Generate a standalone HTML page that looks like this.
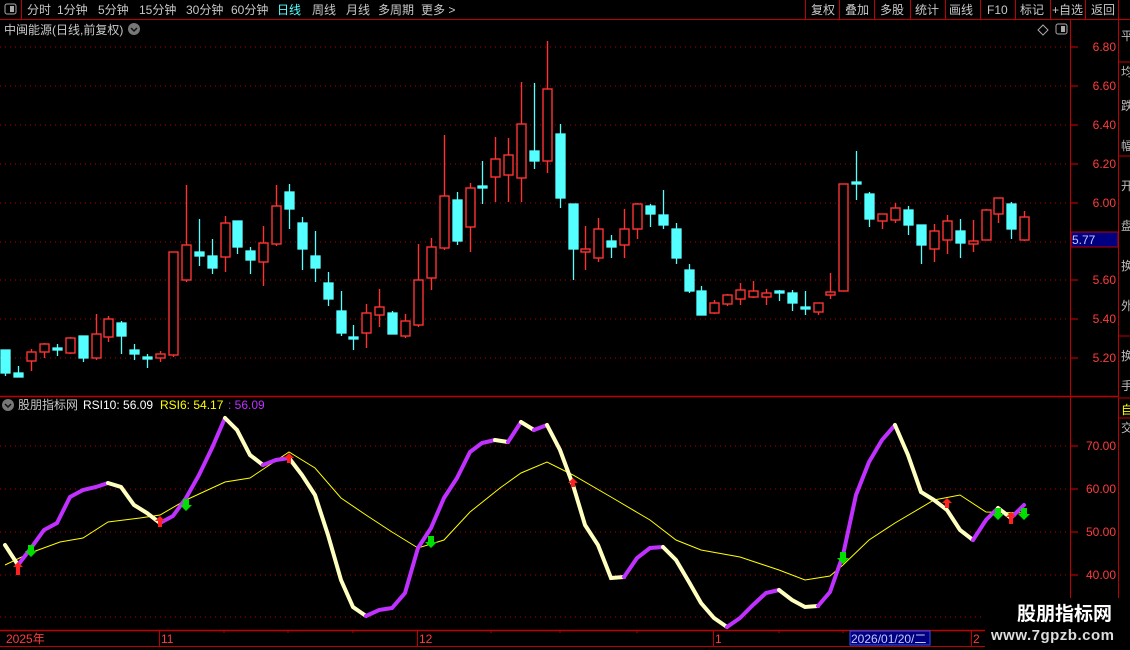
<!DOCTYPE html>
<html><head><meta charset="utf-8"><style>
body{margin:0;background:#000;width:1130px;height:650px;overflow:hidden;font-family:"Liberation Sans","Noto Sans CJK SC",sans-serif;}
</style></head><body>
<svg width="1130" height="650" style="position:absolute;left:0;top:0" font-family="Liberation Sans, Noto Sans CJK SC, sans-serif">
<line x1="0" y1="19.5" x2="1130" y2="19.5" stroke="#c00000"/>
<line x1="21.5" y1="0" x2="21.5" y2="19" stroke="#c00000"/>
<rect x="5" y="4" width="11" height="10" rx="2" fill="none" stroke="#aaa"/><rect x="10" y="6" width="4" height="6" fill="#aaa"/>
<g font-size="12" fill="#c8c8c8">
<text x="27" y="14">分时</text><text x="57" y="14">1分钟</text><text x="98" y="14">5分钟</text><text x="139" y="14">15分钟</text><text x="186" y="14">30分钟</text><text x="231" y="14">60分钟</text>
<text x="277" y="14" fill="#54ffff">日线</text><text x="312" y="14">周线</text><text x="346" y="14">月线</text><text x="378" y="14">多周期</text><text x="421" y="14">更多 &gt;</text>
<text x="811" y="14">复权</text><text x="845" y="14">叠加</text><text x="880" y="14">多股</text><text x="915" y="14">统计</text><text x="949" y="14">画线</text><text x="987" y="14">F10</text><text x="1020" y="14">标记</text><text x="1052" y="14">+自选</text><text x="1091" y="14">返回</text>
</g>
<g stroke="#c00000"><line x1="805.5" y1="0" x2="805.5" y2="19"/><line x1="839.5" y1="0" x2="839.5" y2="19"/><line x1="874.5" y1="0" x2="874.5" y2="19"/><line x1="910.5" y1="0" x2="910.5" y2="19"/><line x1="945.5" y1="0" x2="945.5" y2="19"/><line x1="980.5" y1="0" x2="980.5" y2="19"/><line x1="1015.5" y1="0" x2="1015.5" y2="19"/><line x1="1050.5" y1="0" x2="1050.5" y2="19"/><line x1="1085.5" y1="0" x2="1085.5" y2="19"/><line x1="1118.5" y1="0" x2="1118.5" y2="19"/></g>
<text x="4" y="34" font-size="12" fill="#c8c8c8">中闽能源(日线,前复权)</text>
<circle cx="134" cy="29" r="6" fill="#777"/><path d="M131 28l3 3 3-3" stroke="#111" fill="none" stroke-width="1.5"/>
<path d="M1043 25l5 5-5 5-5-5z" fill="none" stroke="#aaa"/>
<rect x="1056" y="24" width="11" height="10" rx="2" fill="none" stroke="#aaa"/><rect x="1061" y="26" width="4" height="6" fill="#aaa"/>
<line x1="1070.5" y1="20" x2="1070.5" y2="646" stroke="#c00000"/>
<line x1="1118.5" y1="20" x2="1118.5" y2="650" stroke="#c00000"/>
<line x1="0" y1="396.5" x2="1118" y2="396.5" stroke="#c00000" stroke-width="1.5"/>
<line x1="0" y1="630.5" x2="1118" y2="630.5" stroke="#c00000" stroke-width="1.5"/>
<line x1="0" y1="646.5" x2="1118" y2="646.5" stroke="#c00000"/>
<g stroke="#b00000" stroke-dasharray="1 4">
<line x1="0" y1="47" x2="1068" y2="47"/><line x1="0" y1="86" x2="1068" y2="86"/><line x1="0" y1="125" x2="1068" y2="125"/><line x1="0" y1="164" x2="1068" y2="164"/><line x1="0" y1="203" x2="1068" y2="203"/><line x1="0" y1="242" x2="1068" y2="242"/><line x1="0" y1="280" x2="1068" y2="280"/><line x1="0" y1="319" x2="1068" y2="319"/><line x1="0" y1="358" x2="1068" y2="358"/>
<line x1="0" y1="446" x2="1068" y2="446"/><line x1="0" y1="489" x2="1068" y2="489"/><line x1="0" y1="532" x2="1068" y2="532"/><line x1="0" y1="575" x2="1068" y2="575"/><line x1="0" y1="617" x2="1068" y2="617"/>
</g>
<g stroke="#e00000"><line x1="1070" y1="47" x2="1078" y2="47"/><line x1="1070" y1="86" x2="1078" y2="86"/><line x1="1070" y1="125" x2="1078" y2="125"/><line x1="1070" y1="164" x2="1078" y2="164"/><line x1="1070" y1="203" x2="1078" y2="203"/><line x1="1070" y1="280" x2="1078" y2="280"/><line x1="1070" y1="319" x2="1078" y2="319"/><line x1="1070" y1="358" x2="1078" y2="358"/>
<line x1="1070" y1="446" x2="1078" y2="446"/><line x1="1070" y1="489" x2="1078" y2="489"/><line x1="1070" y1="532" x2="1078" y2="532"/><line x1="1070" y1="575" x2="1078" y2="575"/></g>
<g font-size="12" fill="#ff3c3c" text-anchor="end">
<text x="1116" y="51">6.80</text><text x="1116" y="90">6.60</text><text x="1116" y="129">6.40</text><text x="1116" y="168">6.20</text><text x="1116" y="207">6.00</text><text x="1116" y="284">5.60</text><text x="1116" y="323">5.40</text><text x="1116" y="362">5.20</text>
<text x="1116" y="450">70.00</text><text x="1116" y="493">60.00</text><text x="1116" y="536">50.00</text><text x="1116" y="579">40.00</text>
</g>
<rect x="1071" y="232" width="47" height="15" fill="#000080" stroke="#c00000"/>
<text x="1072" y="244" font-size="12" fill="#c8c8ff">5.77</text>
<g stroke="#c00000"><line x1="1118" y1="62" x2="1130" y2="62"/><line x1="1118" y1="156" x2="1130" y2="156"/><line x1="1118" y1="336" x2="1130" y2="336"/><line x1="1118" y1="398" x2="1130" y2="398"/><line x1="1118" y1="418" x2="1130" y2="418"/></g>
<g font-size="12" fill="#bbb"><text x="1121" y="40">平</text><text x="1121" y="76">均</text><text x="1121" y="110">跌</text><text x="1121" y="150">幅</text><text x="1121" y="190">开</text><text x="1121" y="230">盘</text><text x="1121" y="270">换</text><text x="1121" y="310">外</text><text x="1121" y="360">换</text><text x="1121" y="390">手</text><text x="1121" y="414" fill="#ff0">自</text><text x="1121" y="432">交</text></g>
<g stroke="#54ffff" fill="#54ffff" stroke-width="1.3">
<line x1="5.5" y1="350" x2="5.5" y2="376"/><rect x="1" y="350" width="9" height="23"/>
<line x1="18.5" y1="366" x2="18.5" y2="377"/><rect x="14" y="373" width="9" height="4"/>
<line x1="57.5" y1="344" x2="57.5" y2="356"/><rect x="53" y="348" width="9" height="2"/>
<line x1="83.5" y1="336" x2="83.5" y2="362"/><rect x="79" y="336" width="9" height="22"/>
<line x1="121.5" y1="321" x2="121.5" y2="354"/><rect x="117" y="323" width="9" height="13"/>
<line x1="134.5" y1="344" x2="134.5" y2="360"/><rect x="130" y="350" width="9" height="4"/>
<line x1="147.5" y1="354" x2="147.5" y2="368"/><rect x="143" y="357" width="9" height="2"/>
<line x1="199.5" y1="219" x2="199.5" y2="266"/><rect x="195" y="252" width="9" height="4"/>
<line x1="212.5" y1="239" x2="212.5" y2="274"/><rect x="208" y="256" width="9" height="12"/>
<line x1="237.5" y1="221" x2="237.5" y2="254"/><rect x="233" y="221" width="9" height="26"/>
<line x1="250.5" y1="247" x2="250.5" y2="274"/><rect x="246" y="251" width="9" height="9"/>
<line x1="289.5" y1="184" x2="289.5" y2="229"/><rect x="285" y="192" width="9" height="17"/>
<line x1="302.5" y1="217" x2="302.5" y2="270"/><rect x="298" y="223" width="9" height="26"/>
<line x1="315.5" y1="231" x2="315.5" y2="282"/><rect x="311" y="256" width="9" height="12"/>
<line x1="328.5" y1="272" x2="328.5" y2="306"/><rect x="324" y="283" width="9" height="16"/>
<line x1="341.5" y1="291" x2="341.5" y2="336"/><rect x="337" y="311" width="9" height="22"/>
<line x1="353.5" y1="325" x2="353.5" y2="350"/><rect x="349" y="337" width="9" height="2"/>
<line x1="392.5" y1="311" x2="392.5" y2="334"/><rect x="388" y="313" width="9" height="21"/>
<line x1="457.5" y1="192" x2="457.5" y2="245"/><rect x="453" y="200" width="9" height="41"/>
<line x1="482.5" y1="161" x2="482.5" y2="204"/><rect x="478" y="186" width="9" height="2"/>
<line x1="534.5" y1="83" x2="534.5" y2="169"/><rect x="530" y="151" width="9" height="10"/>
<line x1="560.5" y1="124" x2="560.5" y2="208"/><rect x="556" y="134" width="9" height="64"/>
<line x1="573.5" y1="204" x2="573.5" y2="280"/><rect x="569" y="204" width="9" height="45"/>
<line x1="611.5" y1="235" x2="611.5" y2="258"/><rect x="607" y="241" width="9" height="6"/>
<line x1="650.5" y1="204" x2="650.5" y2="227"/><rect x="646" y="206" width="9" height="8"/>
<line x1="663.5" y1="190" x2="663.5" y2="229"/><rect x="659" y="215" width="9" height="10"/>
<line x1="676.5" y1="223" x2="676.5" y2="264"/><rect x="672" y="229" width="9" height="29"/>
<line x1="689.5" y1="264" x2="689.5" y2="293"/><rect x="685" y="270" width="9" height="21"/>
<line x1="701.5" y1="286" x2="701.5" y2="315"/><rect x="697" y="291" width="9" height="24"/>
<line x1="779.5" y1="290" x2="779.5" y2="301"/><rect x="775" y="291" width="9" height="2"/>
<line x1="792.5" y1="290" x2="792.5" y2="311"/><rect x="788" y="293" width="9" height="10"/>
<line x1="805.5" y1="291" x2="805.5" y2="315"/><rect x="801" y="307" width="9" height="2"/>
<line x1="856.5" y1="151" x2="856.5" y2="200"/><rect x="852" y="182" width="9" height="2"/>
<line x1="869.5" y1="192" x2="869.5" y2="227"/><rect x="865" y="194" width="9" height="25"/>
<line x1="908.5" y1="206" x2="908.5" y2="235"/><rect x="904" y="210" width="9" height="15"/>
<line x1="921.5" y1="225" x2="921.5" y2="264"/><rect x="917" y="225" width="9" height="20"/>
<line x1="960.5" y1="219" x2="960.5" y2="258"/><rect x="956" y="231" width="9" height="12"/>
<line x1="1011.5" y1="202" x2="1011.5" y2="239"/><rect x="1007" y="204" width="9" height="25"/>
</g>
<g stroke="#ff3232" fill="#000" stroke-width="1.4">
<line x1="31.5" y1="349" x2="31.5" y2="371"/><rect x="27" y="352" width="9" height="9"/>
<line x1="44.5" y1="343" x2="44.5" y2="358"/><rect x="40" y="344" width="9" height="8"/>
<line x1="70.5" y1="337" x2="70.5" y2="354"/><rect x="66" y="338" width="9" height="15"/>
<line x1="96.5" y1="314" x2="96.5" y2="360"/><rect x="92" y="334" width="9" height="24"/>
<line x1="108.5" y1="316" x2="108.5" y2="342"/><rect x="104" y="319" width="9" height="18"/>
<line x1="160.5" y1="351" x2="160.5" y2="362"/><rect x="156" y="354" width="9" height="4"/>
<line x1="173.5" y1="252" x2="173.5" y2="357"/><rect x="169" y="252" width="9" height="103"/>
<line x1="186.5" y1="185" x2="186.5" y2="282"/><rect x="182" y="245" width="9" height="35"/>
<line x1="225.5" y1="216" x2="225.5" y2="272"/><rect x="221" y="223" width="9" height="34"/>
<line x1="263.5" y1="226" x2="263.5" y2="286"/><rect x="259" y="243" width="9" height="19"/>
<line x1="276.5" y1="185" x2="276.5" y2="246"/><rect x="272" y="206" width="9" height="38"/>
<line x1="366.5" y1="304" x2="366.5" y2="348"/><rect x="362" y="313" width="9" height="20"/>
<line x1="379.5" y1="289" x2="379.5" y2="327"/><rect x="375" y="307" width="9" height="8"/>
<line x1="405.5" y1="314" x2="405.5" y2="338"/><rect x="401" y="321" width="9" height="15"/>
<line x1="418.5" y1="244" x2="418.5" y2="327"/><rect x="414" y="280" width="9" height="45"/>
<line x1="431.5" y1="238" x2="431.5" y2="290"/><rect x="427" y="247" width="9" height="31"/>
<line x1="444.5" y1="135" x2="444.5" y2="250"/><rect x="440" y="196" width="9" height="52"/>
<line x1="470.5" y1="183" x2="470.5" y2="252"/><rect x="466" y="188" width="9" height="39"/>
<line x1="495.5" y1="137" x2="495.5" y2="202"/><rect x="491" y="159" width="9" height="18"/>
<line x1="508.5" y1="138" x2="508.5" y2="202"/><rect x="504" y="155" width="9" height="20"/>
<line x1="521.5" y1="82" x2="521.5" y2="202"/><rect x="517" y="124" width="9" height="54"/>
<line x1="547.5" y1="41" x2="547.5" y2="173"/><rect x="543" y="89" width="9" height="72"/>
<line x1="585.5" y1="226" x2="585.5" y2="270"/><rect x="581" y="249" width="9" height="3"/>
<line x1="598.5" y1="218" x2="598.5" y2="262"/><rect x="594" y="229" width="9" height="29"/>
<line x1="624.5" y1="209" x2="624.5" y2="258"/><rect x="620" y="229" width="9" height="16"/>
<line x1="637.5" y1="203" x2="637.5" y2="239"/><rect x="633" y="204" width="9" height="25"/>
<line x1="714.5" y1="300" x2="714.5" y2="314"/><rect x="710" y="303" width="9" height="10"/>
<line x1="727.5" y1="294" x2="727.5" y2="306"/><rect x="723" y="295" width="9" height="9"/>
<line x1="740.5" y1="283" x2="740.5" y2="305"/><rect x="736" y="290" width="9" height="9"/>
<line x1="753.5" y1="281" x2="753.5" y2="298"/><rect x="749" y="291" width="9" height="6"/>
<line x1="766.5" y1="289" x2="766.5" y2="305"/><rect x="762" y="293" width="9" height="4"/>
<line x1="818.5" y1="303" x2="818.5" y2="315"/><rect x="814" y="303" width="9" height="9"/>
<line x1="830.5" y1="273" x2="830.5" y2="299"/><rect x="826" y="292" width="9" height="3"/>
<line x1="843.5" y1="184" x2="843.5" y2="291"/><rect x="839" y="184" width="9" height="107"/>
<line x1="882.5" y1="214" x2="882.5" y2="229"/><rect x="878" y="214" width="9" height="7"/>
<line x1="895.5" y1="203" x2="895.5" y2="223"/><rect x="891" y="208" width="9" height="12"/>
<line x1="934.5" y1="224" x2="934.5" y2="262"/><rect x="930" y="231" width="9" height="18"/>
<line x1="947.5" y1="215" x2="947.5" y2="254"/><rect x="943" y="221" width="9" height="19"/>
<line x1="973.5" y1="220" x2="973.5" y2="252"/><rect x="969" y="241" width="9" height="3"/>
<line x1="986.5" y1="209" x2="986.5" y2="240"/><rect x="982" y="210" width="9" height="30"/>
<line x1="998.5" y1="198" x2="998.5" y2="223"/><rect x="994" y="198" width="9" height="16"/>
<line x1="1024.5" y1="211" x2="1024.5" y2="241"/><rect x="1020" y="217" width="9" height="23"/>
</g>
<circle cx="8" cy="405" r="6" fill="#777"/><path d="M5 404l3 3 3-3" stroke="#111" fill="none" stroke-width="1.5"/>
<g font-size="12"><text x="18" y="409" fill="#c8c8c8">股朋指标网</text><text x="83" y="409" fill="#fff">RSI10: 56.09</text><text x="160" y="409" fill="#ff0">RSI6: 54.17</text><text x="228" y="409" fill="#c030ff">: 56.09</text></g>
<polyline fill="none" stroke="#ffff00" stroke-width="1" points="5,565 30,553 60,542 83,538 108,522 140,518 160,515 186,500 225,482 250,478 289,452 315,468 341,498 366,515 392,532 418,548 444,540 470,512 500,488 521,473 547,462 573,475 611,497 650,520 676,540 701,550 740,557 779,570 805,580 830,576 843,565 869,540 895,523 934,500 960,495 986,512 1024,513"/>
<g stroke-width="4" stroke-linecap="round" fill="none">
<polyline stroke="#ffffc0" points="5,545 18,565"/>
<polyline stroke="#c030ff" points="18,565 31,548 44,530 57,523 70,497 83,490 96,487 108,483"/>
<polyline stroke="#ffffc0" points="108,483 121,487 134,505 147,513 160,523"/>
<polyline stroke="#c030ff" points="160,523 173,516 186,498 199,475 212,448 225,418"/>
<polyline stroke="#ffffc0" points="225,418 237,430 250,455 263,465"/>
<polyline stroke="#c030ff" points="263,465 276,460 289,458"/>
<polyline stroke="#ffffc0" points="289,458 302,475 315,495 328,535 341,580 353,607 366,616"/>
<polyline stroke="#c030ff" points="366,616 379,610 392,608 405,593 418,548 431,528 444,498 457,478 470,452 482,443 495,440"/>
<polyline stroke="#ffffc0" points="495,440 508,442"/>
<polyline stroke="#c030ff" points="508,442 521,422"/>
<polyline stroke="#ffffc0" points="521,422 534,430"/>
<polyline stroke="#c030ff" points="534,430 547,425"/>
<polyline stroke="#ffffc0" points="547,425 560,450 573,485 585,525 598,545 611,578 624,577"/>
<polyline stroke="#c030ff" points="624,577 637,558 650,548 663,547"/>
<polyline stroke="#ffffc0" points="663,547 676,560 689,582 701,603 714,618 727,627"/>
<polyline stroke="#c030ff" points="727,627 740,618 753,605 766,593 779,590"/>
<polyline stroke="#ffffc0" points="779,590 792,600 805,607 818,606"/>
<polyline stroke="#c030ff" points="818,606 830,592 843,555 856,495 869,462 882,440 895,425"/>
<polyline stroke="#ffffc0" points="895,425 908,455 921,492 934,500 947,510 960,530 973,540"/>
<polyline stroke="#c030ff" points="973,540 986,520 998,508"/>
<polyline stroke="#ffffc0" points="998,508 1011,518"/>
<polyline stroke="#c030ff" points="1011,518 1024,505"/>
</g>
<g fill="#00e000">
<path d="M28 545h6v6h3l-6 6-6-6h3z"/><path d="M183 499h6v6h3l-6 6-6-6h3z"/><path d="M428 536h6v6h3l-6 6-6-6h3z"/><path d="M840 552h6v6h3l-6 6-6-6h3z"/><path d="M995 508h6v6h3l-6 6-6-6h3z"/><path d="M1021 508h6v6h3l-6 6-6-6h3z"/>
</g>
<g fill="#ff2020">
<path d="M18 562l-5 5h3v8h4v-8h3z"/><path d="M160 516l-5 5h3v6h4v-6h3z"/><path d="M289 453l-5 5h3v5h4v-5h3z"/><path d="M573 478l-5 5h3v4h4v-4h3z"/><path d="M947 498l-5 5h3v5h4v-5h3z"/><path d="M1011 512l-5 5h3v7h4v-7h3z"/>
</g>
<g stroke="#c00000"><line x1="159.5" y1="630" x2="159.5" y2="646"/><line x1="417.5" y1="630" x2="417.5" y2="646"/><line x1="713.5" y1="630" x2="713.5" y2="646"/><line x1="971.5" y1="630" x2="971.5" y2="646"/>
<line x1="224" y1="630" x2="224" y2="633"/><line x1="288" y1="630" x2="288" y2="633"/><line x1="353" y1="630" x2="353" y2="633"/><line x1="491" y1="630" x2="491" y2="633"/><line x1="560" y1="630" x2="560" y2="633"/><line x1="637" y1="630" x2="637" y2="633"/><line x1="779" y1="630" x2="779" y2="633"/><line x1="843" y1="630" x2="843" y2="633"/><line x1="908" y1="630" x2="908" y2="633"/></g>
<g font-size="12" fill="#ff3c3c"><text x="6" y="643">2025年</text><text x="161" y="643">11</text><text x="419" y="643">12</text><text x="715" y="643">1</text><text x="973" y="643">2</text></g>
<rect x="850" y="631" width="80" height="14" fill="#000080" stroke="#3050ff"/>
<text x="851" y="643" font-size="12" fill="#c8c8ff">2026/01/20/二</text>
<rect x="985" y="598" width="145" height="52" fill="#000"/>
<text x="1017" y="620" font-size="19" font-weight="bold" fill="#fff">股朋指标网</text>
<text x="991" y="640" font-size="15" font-weight="bold" fill="#ddd" letter-spacing="0.5">www.7gpzb.com</text>
</svg>
</body></html>
